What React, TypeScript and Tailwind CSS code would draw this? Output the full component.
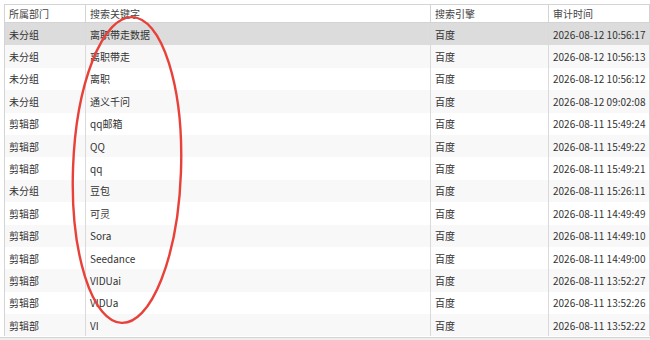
import React from "react";

const rows = [
  ["未分组", "离职带走数据", "百度", "2026-08-12 10:56:17"],
  ["未分组", "离职带走", "百度", "2026-08-12 10:56:13"],
  ["未分组", "离职", "百度", "2026-08-12 10:56:12"],
  ["未分组", "通义千问", "百度", "2026-08-12 09:02:08"],
  ["剪辑部", "qq邮箱", "百度", "2026-08-11 15:49:24"],
  ["剪辑部", "QQ", "百度", "2026-08-11 15:49:22"],
  ["剪辑部", "qq", "百度", "2026-08-11 15:49:21"],
  ["未分组", "豆包", "百度", "2026-08-11 15:26:11"],
  ["剪辑部", "可灵", "百度", "2026-08-11 14:49:49"],
  ["剪辑部", "Sora", "百度", "2026-08-11 14:49:10"],
  ["剪辑部", "Seedance", "百度", "2026-08-11 14:49:00"],
  ["剪辑部", "VIDUai", "百度", "2026-08-11 13:52:27"],
  ["剪辑部", "VIDUa", "百度", "2026-08-11 13:52:26"],
  ["剪辑部", "VI", "百度", "2026-08-11 13:52:22"],
];

const headers = ["所属部门", "搜索关键字", "搜索引擎", "审计时间"];

const grid = "grid grid-cols-[81px_345px_118px_1fr]";

export default function App() {
  return (
    <div
      className="relative w-[650px] h-[340px] overflow-hidden bg-white text-[10px] text-[#333]"
      style={{ fontFamily: '"Noto Sans CJK SC", "Noto Sans", sans-serif' }}
    >
      <div className="pt-[4px] pl-[4px]">
        {/* header */}
        <div className={`${grid} h-[19px] border-t border-l border-b border-[#d4d4d4] bg-white text-[#444]`}>
          {headers.map((h) => (
            <div key={h} className="flex items-center pl-[4px] border-r border-[#d4d4d4]">
              {h}
            </div>
          ))}
        </div>

        {/* rows */}
        {rows.map((r, i) => (
          <div
            key={i}
            className={`${grid} h-[22.4px] border-l border-[#d4d4d4] ${
              i === 0 ? "bg-[#dcdcdc]" : i % 2 === 1 ? "bg-[#f8f8f8]" : "bg-white"
            }`}
          >
            {r.map((c, j) => (
              <div key={j} className="flex items-center pl-[4px] border-r border-[#dadada] whitespace-nowrap">
                {c}
              </div>
            ))}
          </div>
        ))}
      </div>

      {/* footer */}
      <div className="h-[20px] mt-[1px] bg-[#eeeeee] border-t border-[#d4d4d4] pl-[4px] flex items-start pt-[1px] text-[#444]">
        共 13 条
      </div>

      {/* red annotation */}
      <svg className="absolute inset-0 pointer-events-none" width="650" height="340">
        <ellipse
          cx="127"
          cy="170"
          rx="54"
          ry="153"
          fill="none"
          stroke="#e8413a"
          strokeWidth="2.4"
          transform="rotate(2 127 170)"
        />
      </svg>
    </div>
  );
}
